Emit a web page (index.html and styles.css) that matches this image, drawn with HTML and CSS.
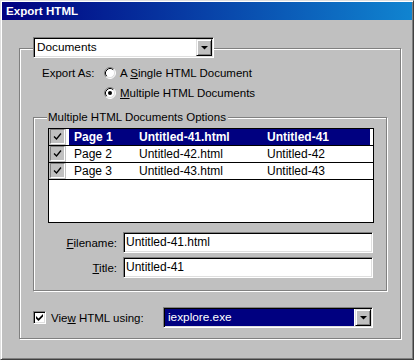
FILE: index.html
```html
<!DOCTYPE html>
<html>
<head>
<meta charset="utf-8">
<link rel="stylesheet" href="styles.css">
</head>
<body>
<div class="window">
  <div class="titlebar">Export HTML</div>
  <div class="outer etched">
    <div class="combo doc-combo">
      <div class="combo-text">Documents</div>
      <div class="combo-btn"><svg width="7" height="4" viewBox="0 0 7 4"><polygon points="0,0 7,0 3.5,3.5" fill="#000"/></svg></div>
    </div>
    <div class="export-row">
      <div class="export-label">Export As:</div>
      <div class="radios">
        <div class="radio-item">
          <svg class="radio" width="12" height="12" viewBox="0 0 12 12">
            <circle cx="6" cy="6" r="5" fill="#fff"/>
            <path d="M9.89 2.11 A5.5 5.5 0 0 0 2.11 9.89" fill="none" stroke="#808080"/>
            <path d="M2.11 9.89 A5.5 5.5 0 0 0 9.89 2.11" fill="none" stroke="#fff"/>
            <path d="M9.18 2.82 A4.5 4.5 0 0 0 2.82 9.18" fill="none" stroke="#000"/>
            <path d="M2.82 9.18 A4.5 4.5 0 0 0 9.18 2.82" fill="none" stroke="#dfdfdf"/>
          </svg>
          <span>A <u>S</u>ingle HTML Document</span>
        </div>
        <div class="radio-item">
          <svg class="radio" width="12" height="12" viewBox="0 0 12 12">
            <circle cx="6" cy="6" r="5" fill="#fff"/>
            <path d="M9.89 2.11 A5.5 5.5 0 0 0 2.11 9.89" fill="none" stroke="#808080"/>
            <path d="M2.11 9.89 A5.5 5.5 0 0 0 9.89 2.11" fill="none" stroke="#fff"/>
            <path d="M9.18 2.82 A4.5 4.5 0 0 0 2.82 9.18" fill="none" stroke="#000"/>
            <path d="M2.82 9.18 A4.5 4.5 0 0 0 9.18 2.82" fill="none" stroke="#dfdfdf"/>
            <circle cx="6" cy="6" r="2" fill="#000"/>
          </svg>
          <span><u>M</u>ultiple HTML Documents</span>
        </div>
      </div>
    </div>
    <div class="inner etched">
      <div class="legend">Multiple HTML Documents Options</div>
      <div class="listbox">
        <div class="row sel">
          <div class="chk-cell"><div class="chk-box"><svg width="11" height="11" viewBox="0 0 11 11"><polyline points="2,5.5 4.5,8 9,2.5" fill="none" stroke="#000" stroke-width="1.3"/></svg></div></div>
          <div class="row-main"><span class="c1">Page 1</span><span class="c2">Untitled-41.html</span><span class="c3">Untitled-41</span></div>
        </div>
        <div class="row">
          <div class="chk-cell"><div class="chk-box"><svg width="11" height="11" viewBox="0 0 11 11"><polyline points="2,5.5 4.5,8 9,2.5" fill="none" stroke="#000" stroke-width="1.3"/></svg></div></div>
          <div class="row-main"><span class="c1">Page 2</span><span class="c2">Untitled-42.html</span><span class="c3">Untitled-42</span></div>
        </div>
        <div class="row">
          <div class="chk-cell"><div class="chk-box"><svg width="11" height="11" viewBox="0 0 11 11"><polyline points="2,5.5 4.5,8 9,2.5" fill="none" stroke="#000" stroke-width="1.3"/></svg></div></div>
          <div class="row-main"><span class="c1">Page 3</span><span class="c2">Untitled-43.html</span><span class="c3">Untitled-43</span></div>
        </div>
      </div>
      <div class="field first">
        <div class="field-label"><u>F</u>ilename:</div>
        <div class="textbox">Untitled-41.html</div>
      </div>
      <div class="field">
        <div class="field-label"><u>T</u>itle:</div>
        <div class="textbox">Untitled-41</div>
      </div>
    </div>
    <div class="view-row">
      <div class="checkbox"><svg width="7" height="7" viewBox="0 0 7 7"><polygon points="0,2 2.5,4.5 7,0 7,2.5 2.5,7 0,4.5" fill="#000"/></svg></div>
      <div class="view-label">Vie<u>w</u> HTML using:</div>
      <div class="combo view-combo">
        <div class="combo-text sel-text">iexplore.exe</div>
        <div class="combo-btn"><svg width="7" height="4" viewBox="0 0 7 4"><polygon points="0,0 7,0 3.5,3.5" fill="#000"/></svg></div>
      </div>
    </div>
  </div>
</div>
</body>
</html>
```

FILE: styles.css
```css
body {
  margin: 0;
  font-family: "Liberation Sans", Arial, sans-serif;
  font-size: 11.5px;
  color: #000;
}

.window {
  width: 414px;
  height: 360px;
  box-sizing: border-box;
  background: #c0c0c0;
  border: 1px solid;
  border-color: #dfdfdf #404040 #404040 #dfdfdf;
  padding: 1px;
  box-shadow: inset 1px 1px #fff, inset -1px -1px #808080;
  overflow: hidden;
}

.titlebar {
  height: 18px;
  background: linear-gradient(90deg, #000080, #1084d0);
  color: #fff;
  font-weight: bold;
  font-size: 11.6px;
  line-height: 18px;
  padding-left: 4px;
}

.etched {
  border: 1px solid #808080;
  box-shadow: inset 1px 1px #fff, 1px 1px #fff;
}

.outer {
  margin: 28px 0 0 17px;
  width: 382px;
  box-sizing: border-box;
  padding-bottom: 10px;
}

.combo {
  display: flex;
  box-sizing: border-box;
  height: 21px;
  border: 1px solid;
  border-color: #808080 #fff #fff #808080;
  box-shadow: inset 1px 1px #000, inset -1px -1px #dfdfdf;
  padding: 1px;
  background: #fff;
}

.combo-text {
  flex: 1;
  line-height: 17px;
  padding-left: 2px;
  font-size: 11.8px;
  white-space: nowrap;
}

.combo-btn {
  width: 16px;
  height: 17px;
  box-sizing: border-box;
  border: 1px solid;
  border-color: #dfdfdf #000 #000 #dfdfdf;
  box-shadow: inset 1px 1px #fff, inset -1px -1px #808080;
  background: #c0c0c0;
  display: flex;
  align-items: center;
  justify-content: center;
}

.doc-combo {
  margin: -12px 0 0 13px;
  width: 181px;
}

.export-row {
  display: flex;
  margin: 5px 0 0 22px;
}

.export-label {
  width: 62px;
  line-height: 20px;
}

.radio-item {
  display: flex;
  align-items: center;
  gap: 4px;
  height: 20px;
}

.radio {
  display: block;
}

.inner {
  margin: 14px 13px 0 13px;
  padding-bottom: 12px;
}

.legend {
  width: fit-content;
  margin: -8px 0 0 13px;
  padding: 0 2px 0 1px;
  background: #c0c0c0;
  line-height: 14px;
}

.listbox {
  margin: 4px 0 0 14px;
  width: 326px;
  height: 95px;
  box-sizing: border-box;
  border: 1px solid #000;
  background: #fff;
}

.row {
  display: flex;
  height: 17px;
  box-sizing: border-box;
  border-bottom: 1px solid #000;
}

.chk-cell {
  width: 18px;
  background: #c0c0c0;
  box-sizing: border-box;
  padding: 0 1px 0 1px;
  border-right: 1px solid #fff;
}

.chk-box {
  width: 15px;
  height: 15px;
  box-sizing: border-box;
  border: 1px solid;
  border-color: #808080 #fff #fff #808080;
  display: flex;
  align-items: center;
  justify-content: center;
}

.row-main {
  margin-left: 2px;
  width: 301px;
  display: flex;
  line-height: 16px;
  font-size: 12px;
  white-space: nowrap;
}

.row.sel .row-main {
  background: #000080;
  color: #fff;
  font-weight: bold;
}

.c1 {
  width: 70px;
  padding-left: 5px;
  box-sizing: border-box;
}

.c2 {
  width: 128px;
}

.field {
  display: flex;
  align-items: center;
  margin-top: 4px;
}

.field.first {
  margin-top: 9px;
}

.field-label {
  width: 83px;
  text-align: right;
}

.textbox {
  margin-left: 6px;
  width: 250px;
  height: 21px;
  box-sizing: border-box;
  border: 1px solid;
  border-color: #808080 #fff #fff #808080;
  box-shadow: inset 1px 1px #000, inset -1px -1px #dfdfdf;
  padding: 1px 1px 1px 2px;
  background: #fff;
  line-height: 17px;
  font-size: 12px;
}

.view-row {
  display: flex;
  align-items: center;
  margin: 16px 0 0 13px;
  height: 21px;
}

.checkbox {
  width: 13px;
  height: 13px;
  box-sizing: border-box;
  border: 1px solid;
  border-color: #808080 #fff #fff #808080;
  box-shadow: inset 1px 1px #000, inset -1px -1px #dfdfdf;
  background: #fff;
  display: flex;
  align-items: center;
  justify-content: center;
}

.view-label {
  margin-left: 5px;
  width: 112px;
}

.view-combo {
  width: 210px;
}

.sel-text {
  background: #000080;
  color: #fff;
  padding-left: 3px;
  margin-right: 1px;
}
```
